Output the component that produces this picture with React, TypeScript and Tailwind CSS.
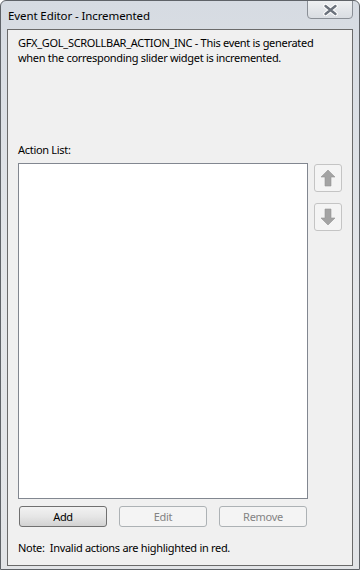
import React from 'react';

const font = { fontFamily: '"Noto Sans", "Open Sans", Arial, sans-serif' };

function Arrow({ down }: { down?: boolean }) {
  return (
    <svg width="16" height="18" viewBox="0 0 16 18" className={down ? 'rotate-180' : ''}>
      <path d="M8 1 L15 8 L11 8 L11 17 L5 17 L5 8 L1 8 Z" fill="#a3a3a3" stroke="#939393" strokeWidth="0.6" strokeLinejoin="round" />
    </svg>
  );
}

function MoveButton({ down }: { down?: boolean }) {
  return (
    <div className="w-[28px] h-[28px] rounded-[3px] border border-[#c4c4c4] bg-[#f4f4f4] flex items-center justify-center">
      <Arrow down={down} />
    </div>
  );
}

function Button({ label, enabled }: { label: string; enabled?: boolean }) {
  return enabled ? (
    <div className="w-[88px] h-[21px] rounded-[3px] border border-[#707070] bg-gradient-to-b from-[#f2f2f2] via-[#e6e6e6] to-[#d2d2d2] flex items-center justify-center text-[11px] tracking-[-0.3px] text-black">
      {label}
    </div>
  ) : (
    <div className="w-[88px] h-[21px] rounded-[3px] border border-[#adb2b5] bg-[#f4f4f4] flex items-center justify-center text-[11px] tracking-[-0.3px] text-[#838383]">
      {label}
    </div>
  );
}

export default function App() {
  return (
    <div
      style={font}
      className="w-[360px] h-[570px] flex flex-col bg-gradient-to-b from-[#d6dbe2] via-[#e4e6e9] to-[#e2e4e7] border border-[#5f6368] rounded-t-[6px] overflow-hidden"
    >
      {/* Title bar */}
      <div className="h-[28px] flex items-start shrink-0">
        <div className="pl-[7px] pt-[6px] text-[11.5px] tracking-[-0.1px] text-black">Event Editor - Incremented</div>
        <div className="ml-auto mr-[6px] w-[46px] h-[19px] -mt-px rounded-b-[4px] border border-[#8a8f96] bg-gradient-to-b from-[#eef0f2] to-[#d9dde2] flex items-center justify-center">
          <svg width="15" height="12" viewBox="0 0 15 12">
            <path d="M2.5 2 L12.5 10 M12.5 2 L2.5 10" stroke="#ffffff" strokeWidth="4.4" strokeLinecap="round" />
            <path d="M2.5 2 L12.5 10 M12.5 2 L2.5 10" stroke="#6c737d" strokeWidth="2.4" strokeLinecap="round" />
          </svg>
        </div>
      </div>

      {/* Client */}
      <div className="flex-1 mx-[6px] mb-[3px] border border-[#6a6a6a] bg-[#f0f0f0] flex flex-col pl-[10px] pr-[9px] text-[11px] tracking-[-0.3px] leading-[15px] text-black">
        <div className="pt-[5px] whitespace-nowrap">
          GFX_GOL_SCROLLBAR_ACTION_INC - This event is generated
          <br />
          when the corresponding slider widget is incremented.
        </div>

        <div className="mt-[77px]">Action List:</div>

        <div className="mt-[6px] flex gap-[6px]">
          <div className="w-[290px] h-[336px] bg-white border border-[#828790]" />
          <div className="flex flex-col gap-[11px] pt-[1px]">
            <MoveButton />
            <MoveButton down />
          </div>
        </div>

        <div className="mt-[7px] flex gap-[12px] pl-[1px]">
          <Button label="Add" enabled />
          <Button label="Edit" />
          <Button label="Remove" />
        </div>

        <div className="mt-[13px]">
          Note:&nbsp; Invalid actions are highlighted in red.
        </div>
      </div>
    </div>
  );
}
